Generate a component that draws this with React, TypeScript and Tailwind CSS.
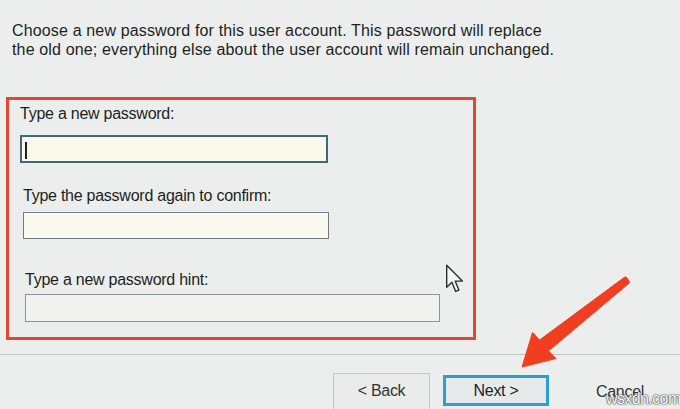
const font = { fontFamily: '"Liberation Sans", Arial, sans-serif' }

function Field({ label, className, focused }: { label: string; className: string; focused?: boolean }) {
  return (
    <div className="flex flex-col">
      <div className="text-[16px] leading-[20px] tracking-[-0.25px] text-[#1c1f22]">{label}</div>
      <div className={className}>
        {focused && <div className="ml-[3px] mt-[5px] h-[17px] w-[1.5px] bg-[#222]" />}
      </div>
    </div>
  )
}

export default function App() {
  return (
    <div
      className="relative h-[409px] w-[680px] overflow-hidden bg-[#eceeed] text-[#1c1f22]"
      style={font}
    >
      <p className="pl-[12px] pt-[21px] text-[16px] leading-[19px] tracking-[0.15px]">
        Choose a new password for this user account. This password will replace
        <br />
        the old one; everything else about the user account will remain unchanged.
      </p>

      <div className="ml-[6px] mt-[38px] h-[243px] w-[470px] border-[3px] border-[#e2472f] pl-[11px] pt-[4px]">
        <Field
          label="Type a new password:"
          className="mt-[11px] h-[28px] w-[308px] border-2 border-[#3c6a7a] bg-[#fbfaea]"
          focused
        />
        <div className="mt-[23px] pl-[3px]">
          <Field
            label="Type the password again to confirm:"
            className="mt-[6px] h-[27px] w-[306px] border border-[#6f7c82] bg-[#f9f9ee]"
          />
        </div>
        <div className="mt-[31px] pl-[5px]">
          <Field
            label="Type a new password hint:"
            className="mt-[4px] h-[28px] w-[415px] border border-[#8a9499] bg-[#f1f2ef]"
          />
        </div>
      </div>

      <div className="mt-[14px] h-px w-full bg-[#c3c7c6]" />

      <div className="ml-[333px] mt-[18px] flex items-start gap-[13px] text-[16px] tracking-[-0.3px]">
        <div className="flex h-[38px] w-[97px] items-center justify-center border border-[#c4c8c8] bg-[#eaeceb] pb-[2px] text-[#333]">
          &lt; Back
        </div>
        <div className="mt-[2px] flex h-[31px] w-[106px] items-center justify-center border-[3px] border-[#2c9fd2] bg-[#e6eaea] text-[#222]">
          Next &gt;
        </div>
        <div className="ml-[10px] flex h-[38px] w-[96px] items-center justify-center text-[#333]">
          Cancel
        </div>
      </div>

      {/* mouse pointer */}
      <svg className="absolute left-[446px] top-[264px]" width="18" height="30" viewBox="0 0 13 21">
        <path
          d="M0.5 0.5 L0.5 16.5 L4.3 12.8 L7 19.5 L9.3 18.5 L6.6 12 L11.8 12 Z"
          fill="#f6f7f6"
          stroke="#2a2d2e"
          strokeWidth="1"
          strokeLinejoin="round"
        />
      </svg>

      {/* red callout arrow */}
      <svg className="pointer-events-none absolute inset-0" width="680" height="409" viewBox="0 0 680 409">
        <path
          d="M624.5 277.2 Q627 275.5 629.5 282.8 L548.5 350.9 L556 358.5 L522 367 L532.5 332.5 L539.5 340.1 Z"
          fill="#f13d20"
          stroke="#f13d20"
          strokeWidth="1"
          strokeLinejoin="round"
        />
      </svg>

      <div
        className="absolute left-[606px] top-[390px] text-[16px] leading-[17px] tracking-[-0.6px] text-white"
        style={{ textShadow: '0 0 2px #222, 0 0 1px #222' }}
      >
        wsxdn.com
      </div>
    </div>
  )
}
